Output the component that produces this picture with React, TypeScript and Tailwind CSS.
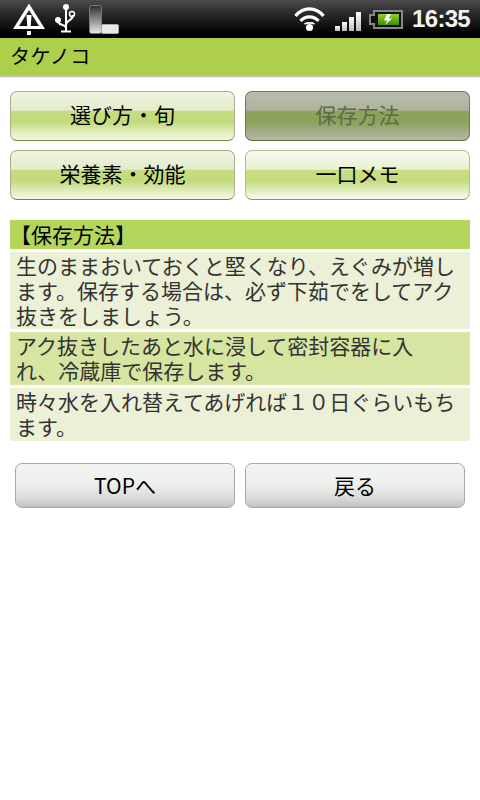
const FONT = "font-['Noto_Sans_CJK_JP','Noto_Sans',sans-serif]";

function Warning() {
  return (
    <svg width="32" height="38" viewBox="13 0 32 38" className="shrink-0">
      <path d="M29 3.5 L45 29 H13 Z M29 10 L19 26 H39 Z" fill="#fff" fillRule="evenodd" />
      <path d="M26.5 15 H31.5 L30.5 29 H27.5 Z" fill="#fff" />
      <rect x="27" y="31" width="4" height="4" fill="#fff" />
    </svg>
  );
}

function Usb() {
  return (
    <svg width="22" height="38" viewBox="54 0 22 38" className="shrink-0">
      <circle cx="66" cy="7" r="3" fill="#fff" />
      <path d="M66 7 V31 M61 31.5 H71 M58 22 C60 26 66 24 66 28 M73 15 C73 21 66 20 66 25" fill="none" stroke="#fff" strokeWidth="2" />
      <circle cx="58" cy="20" r="3" fill="#fff" />
      <circle cx="72" cy="14" r="2.5" fill="none" stroke="#fff" strokeWidth="1.5" />
    </svg>
  );
}

function Storage() {
  return (
    <svg width="30" height="38" viewBox="89 0 30 38" className="shrink-0">
      <defs>
        <linearGradient id="st" x1="0" y1="0" x2="0" y2="1">
          <stop offset="0" stopColor="#2e2e2e" />
          <stop offset="1" stopColor="#e8e8e8" />
        </linearGradient>
      </defs>
      <rect x="89.5" y="5.5" width="12" height="28" rx="2" fill="url(#st)" stroke="#777" />
      <rect x="101.5" y="24.5" width="17" height="9" rx="1.5" fill="#e8e8e8" stroke="#aaa" />
    </svg>
  );
}

function Wifi() {
  return (
    <svg width="31" height="38" viewBox="295 0 31 38" className="shrink-0">
      <path d="M296.5 16 C304 6.5 317 6.5 324.5 16 M301.5 21 C306 15.5 315 15.5 319.5 21" fill="none" stroke="#fff" strokeWidth="3.2" />
      <path d="M305.5 24 C308 22.5 313 22.5 315.5 24" fill="none" stroke="#fff" strokeWidth="1.6" />
      <circle cx="310.5" cy="27.5" r="3.6" fill="#fff" />
    </svg>
  );
}

function Signal() {
  return (
    <svg width="26" height="38" viewBox="336 0 26 38" className="shrink-0">
      <defs>
        <linearGradient id="sg" x1="0" y1="0" x2="0" y2="1">
          <stop offset="0" stopColor="#fff" />
          <stop offset="1" stopColor="#bbb" />
        </linearGradient>
      </defs>
      <rect x="336" y="26" width="5" height="5" fill="url(#sg)" />
      <rect x="343" y="22" width="5" height="9" fill="url(#sg)" />
      <rect x="350" y="17" width="5" height="14" fill="url(#sg)" />
      <rect x="357" y="12" width="5" height="19" fill="url(#sg)" />
    </svg>
  );
}

function Battery() {
  return (
    <svg width="34" height="38" viewBox="370 0 34 38" className="shrink-0">
      <defs>
        <linearGradient id="bt" x1="0" y1="0" x2="0" y2="1">
          <stop offset="0" stopColor="#8fd42a" />
          <stop offset="1" stopColor="#3f8a08" />
        </linearGradient>
      </defs>
      <path d="M375 11 H403 V28 H375 V24 H371 V15 H375 Z" fill="#111" stroke="#888" strokeWidth="2" />
      <rect x="379" y="14" width="21" height="11" fill="url(#bt)" />
      <path d="M388 14 L385 20.5 H388.5 L386 25 L393 18.5 H389.5 L392 14 Z" fill="#fff" />
    </svg>
  );
}

function NavButton({ label, variant }: { label: string; variant: "normal" | "light" | "active" }) {
  const styles = {
    normal:
      "bg-[linear-gradient(to_bottom,#eff4e2_0%,#e3eccb_38%,#c6dc82_40%,#c2da7c_62%,#e2edc2_85%,#f3f7e8_100%)] border-[#a8b08c] border-b-[#6f8a30] text-black",
    light:
      "bg-[linear-gradient(to_bottom,#f6f9ee_0%,#e8f1d0_38%,#c8de84_40%,#c4dc7e_62%,#e4efc6_85%,#f7faf0_100%)] border-[#b4bc98] border-b-[#8aa040] text-black",
    active:
      "bg-[linear-gradient(to_bottom,#b9bdaf_0%,#adb39e_38%,#8fa35c_40%,#8ba25a_62%,#a3ad8a_85%,#b4b8a8_100%)] border-[#707a55] border-b-[#5c6e28] text-[#5c6b45]",
  }[variant];
  return (
    <div className={`h-[50px] flex-1 rounded-[7px] border ${styles} flex items-center justify-center pb-[2px] text-[21px]`}>
      {label}
    </div>
  );
}

function Para({ children, dark, heightClass }: { children: React.ReactNode; dark?: boolean; heightClass: string }) {
  return (
    <p className={`${heightClass} pl-[6px] pr-[8px] pt-[1px] text-[21px] leading-[25px] text-[#333] ${dark ? "bg-[#d6e5a2]" : "bg-[#ebf0d6]"}`}>
      {children}
    </p>
  );
}

function GreyButton({ label }: { label: string }) {
  return (
    <div className="h-[45px] flex-1 rounded-[7px] border border-[#a8a8a8] bg-[linear-gradient(to_bottom,#f2f4f2_0%,#eef0ee_45%,#d9dbd9_80%,#bfc1bf_100%)] flex items-center justify-center pt-[1px] text-[21px] text-black">
      {label}
    </div>
  );
}

export default function App() {
  return (
    <div className={`w-[480px] h-[800px] bg-white overflow-hidden ${FONT}`}>
      <div className="h-[38px] flex items-center pl-[13px] pr-[10px] bg-[linear-gradient(to_bottom,#4c4c4c_0%,#262626_40%,#000_90%)]">
        <Warning />
        <div className="ml-[9px]"><Usb /></div>
        <div className="ml-[13px]"><Storage /></div>
        <div className="ml-auto"><Wifi /></div>
        <div className="ml-[10px]"><Signal /></div>
        <div className="ml-[8px]"><Battery /></div>
        <span className="ml-[9px] font-['Liberation_Sans',sans-serif] font-bold text-[24px] tracking-[-0.7px] text-[#f2f2f2]">16:35</span>
      </div>
      <div className="h-[37px] bg-[#aecf4c] flex items-center pl-[10px] pb-[1px] text-[20px] tracking-[0.5px] text-black shadow-[0_2px_1px_#bdbdbd]">
        タケノコ
      </div>
      <div className="px-[10px] pt-[16px]">
        <div className="flex gap-[10px]">
          <NavButton label="選び方・旬" variant="normal" />
          <NavButton label="保存方法" variant="active" />
        </div>
        <div className="flex gap-[10px] mt-[9px]">
          <NavButton label="栄養素・効能" variant="normal" />
          <NavButton label="一口メモ" variant="light" />
        </div>
        <div className="mt-[20px] flex flex-col gap-[3px]">
          <div className="h-[29px] bg-[#b5d65c] flex items-center text-[21px] text-black">【保存方法】</div>
          <Para heightClass="h-[77px]">生のままおいておくと堅くなり、えぐみが増します。保存する場合は、必ず下茹でをしてアク抜きをしましょう。</Para>
          <Para dark heightClass="h-[53px]">アク抜きしたあと水に浸して密封容器に入<br />れ、冷蔵庫で保存します。</Para>
          <Para heightClass="h-[53px]">時々水を入れ替えてあげれば１０日ぐらいもちます。</Para>
        </div>
        <div className="flex gap-[10px] mt-[22px] px-[5px]">
          <GreyButton label="TOPへ" />
          <GreyButton label="戻る" />
        </div>
      </div>
    </div>
  );
}
